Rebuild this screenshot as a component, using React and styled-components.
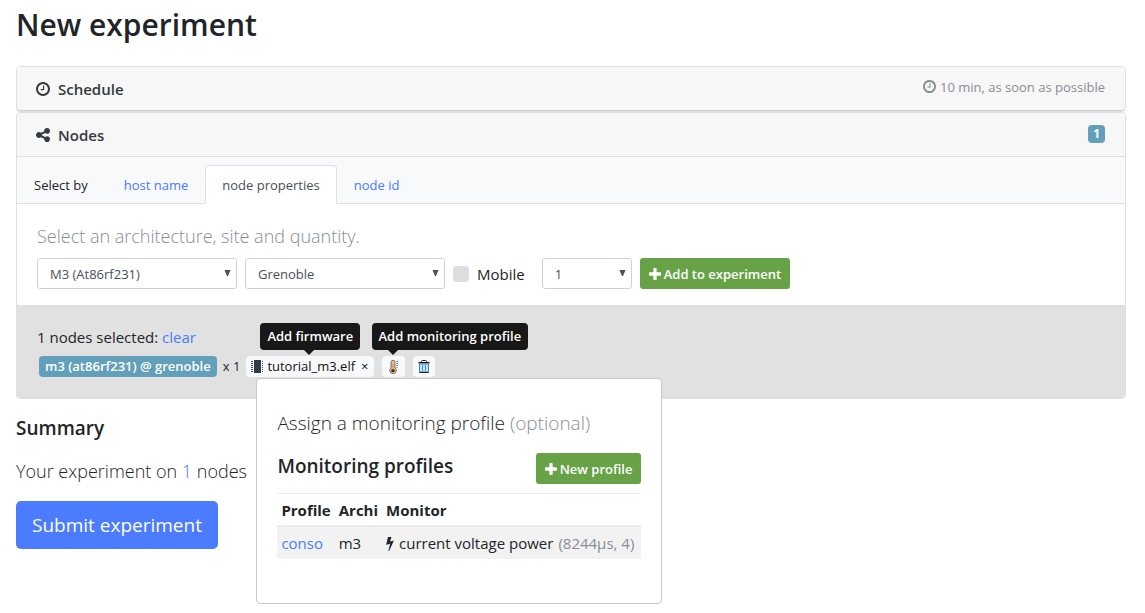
import React from "react";
import styled, { createGlobalStyle } from "styled-components";

const GlobalStyle = createGlobalStyle`
  *, *::before, *::after { box-sizing: border-box; }
  body {
    margin: 0;
    background: #fff;
    color: #212529;
    font-family: "Open Sans", "Noto Sans", sans-serif;
    font-size: 15px;
    line-height: 24px;
  }
  button, select, input { font-family: inherit; margin: 0; }
  h1, h2, h3, p { margin: 0; }
`;

const Page = styled.main`
  min-height: 100vh;
  padding: 4px 19px 8px 16px;
`;

const Title = styled.h1`
  font-size: 30px;
  font-weight: 600;
  line-height: 42px;
  margin-bottom: 20px;
`;

const Card = styled.section`
  border: 1px solid #dfdfdf;
  border-radius: 4px;
  background: #fff;
`;

const CardHeader = styled.header`
  display: flex;
  align-items: center;
  justify-content: space-between;
  height: 44px;
  padding: 0 20px 0 19px;
  background: #f7f7f7;
  border-bottom: 1px solid ${(p) => (p.$closed ? "#cfcfcf" : "#dfdfdf")};
  border-radius: ${(p) => (p.$closed ? "4px" : "4px 4px 0 0")};
`;

const CardTitle = styled.h2`
  display: flex;
  align-items: center;
  gap: 8px;
  font-size: 15px;
  font-weight: 600;
  line-height: 24px;
  color: #343a40;
`;

const HeaderNote = styled.span`
  display: flex;
  align-items: center;
  gap: 4px;
  padding-bottom: 4px;
  color: #868e96;
  font-size: 13px;
`;

const Badge = styled.span`
  padding: ${(p) => (p.$small ? "0 5px" : "0 6px")};
  border-radius: 4px;
  background: #629fba;
  color: #fff;
  font-size: ${(p) => (p.$small ? "12px" : "13px")};
  font-weight: ${(p) => (p.$small ? 700 : 600)};
  line-height: ${(p) => (p.$small ? "18px" : "21px")};
  margin-bottom: ${(p) => (p.$small ? "2px" : "0")};
  white-space: nowrap;
`;

const Tabs = styled.nav`
  display: flex;
  height: 47px;
  padding: 8px 17px 0;
  background: #f8f9fb;
  border-bottom: 1px solid #dfdfdf;
  font-size: 13px;
  line-height: 38px;
`;

const TabsLabel = styled.span`
  margin-right: 19px;
  line-height: 40px;
`;

const Tab = styled.a`
  height: 39px;
  padding: 0 16px;
  border: 1px solid ${(p) => (p.$active ? "#dfdfdf" : "transparent")};
  border-bottom-color: ${(p) => (p.$active ? "#fff" : "transparent")};
  border-radius: 4px 4px 0 0;
  background: ${(p) => (p.$active ? "#fff" : "transparent")};
  color: ${(p) => (p.$active ? "#495057" : "#4b7bff")};
  text-decoration: none;
`;

const CardBody = styled.div`
  padding: 17px 20px 16px;
`;

const Lead = styled.p`
  font-size: ${(p) => p.$size || 18}px;
  font-weight: 300;
  line-height: 30px;
  color: ${(p) => (p.$muted ? "#868e96" : "#212529")};
`;

const Form = styled.form`
  display: flex;
  flex-wrap: wrap;
  align-items: center;
  gap: 8px;
  margin-top: 7px;
`;

const SelectBox = styled.span`
  position: relative;
  width: ${(p) => p.$width}px;

  svg {
    position: absolute;
    top: 12px;
    right: 6px;
    pointer-events: none;
  }
`;

const Select = styled.select`
  display: block;
  width: 100%;
  height: 31px;
  padding: 0 12px;
  appearance: none;
  border: 1px solid #ced0da;
  border-radius: 3px;
  background: #fff;
  color: #495057;
  font-size: 13px;
`;

const CheckLabel = styled.label`
  display: flex;
  align-items: center;
  gap: 8px;
  margin-right: 9px;
`;

const Checkbox = styled.input`
  width: 16px;
  height: 16px;
  appearance: none;
  border-radius: 4px;
  background: #ddd;

  &:checked { background: #4b7bff; }
`;

const Button = styled.button`
  display: inline-flex;
  align-items: center;
  gap: 3px;
  height: 31px;
  padding: 0 9px;
  border: 0;
  border-radius: 3px;
  background: #67a346;
  color: #fff;
  font-size: 13px;
  font-weight: 600;
  white-space: nowrap;
`;

const SubmitButton = styled(Button)`
  height: 48px;
  margin-top: 15px;
  padding: 0 16px;
  border-radius: 5px;
  background: #4b7bff;
  font-size: 19px;
  font-weight: 400;
`;

const Selection = styled.div`
  padding: 20px 20px 21px;
  background: #e1e1e1;
  border-radius: 0 0 4px 4px;
`;

const Link = styled.a`
  color: #4b7bff;
  text-decoration: none;
`;

const SelectedRow = styled.div`
  display: flex;
  align-items: center;
  margin-top: 7px;
  padding-left: 2px;
  font-size: 13px;
  line-height: 21px;
`;

const Count = styled.span`
  margin: 0 6px;
`;

const Assignments = styled.div`
  position: relative;
  display: flex;
  gap: 8px;
`;

const Chip = styled.div`
  position: relative;
  display: flex;
  align-items: center;
  height: 21px;
  padding: 0 5px;
  border-radius: 4px;
  background: #f8f9fb;
  color: #111;
`;

const ChipButton = styled.button`
  display: flex;
  align-items: center;
  gap: 3px;
  padding: 0;
  border: 0;
  background: none;
  color: inherit;
  font-size: 13px;
  line-height: 21px;
  margin-left: ${(p) => (p.$close ? "6px" : "0")};
`;

const Tooltip = styled.span`
  position: absolute;
  bottom: 27px;
  left: ${(p) => p.$left}px;
  padding: 0 7px;
  border-radius: 4px;
  background: #181818;
  color: #fff;
  font-size: 13px;
  font-weight: 600;
  line-height: 27px;
  white-space: nowrap;

  &::after {
    content: "";
    position: absolute;
    top: 100%;
    left: ${(p) => p.$arrow}px;
    border: 5px solid transparent;
    border-top-color: #181818;
    border-bottom: 0;
  }
`;

const Popover = styled.div`
  position: absolute;
  top: 22px;
  left: 10px;
  width: 406px;
  padding: 29px 20px 44px;
  border: 1px solid #c9c9c9;
  border-radius: 4px;
  background: #fff;
  font-size: 15px;
`;

const Muted = styled.span`
  color: #868e96;
`;

const PopoverHead = styled.div`
  display: flex;
  align-items: center;
  justify-content: space-between;
  margin: 15px 0 9px;
`;

const SubHeading = styled.h3`
  font-size: 19px;
  font-weight: 600;
  line-height: 24px;
  padding-bottom: 5px;
`;

const Table = styled.table`
  width: 100%;
  border-collapse: collapse;
  white-space: nowrap;
  line-height: 24px;
  font-size: 15px;

  th, td { padding: 4px; text-align: left; }
  th { padding-bottom: 3px; border-top: 1px solid #e9ecef; border-bottom: 2px solid #e9ecef; }
  td { background: #f2f2f2; }
  th:last-child, td:last-child { width: 100%; }
`;

const Monitor = styled.span`
  display: flex;
  align-items: center;
  gap: 5px;
`;

const Summary = styled.section`
  margin-top: 17px;

  h2 { margin-bottom: 11px; }
`;

const FA_PATHS = {
  clock:
    "M1024 544v448q0 14-9 23t-23 9h-320q-14 0-23-9t-9-23v-64q0-14 9-23t23-9h224v-352q0-14 9-23t23-9h64q14 0 23 9t9 23zm416 352q0-148-73-273t-198-198-273-73-273 73-198 198-73 273 73 273 198 198 273 73 273-73 198-198 73-273zm224 0q0 209-103 385.5t-279.5 279.5-385.5 103-385.5-103-279.5-279.5-103-385.5 103-385.5 279.5-279.5 385.5-103 385.5 103 279.5 279.5 103 385.5z",
  share:
    "M1344 1024q133 0 226.5 93.5t93.5 226.5-93.5 226.5-226.5 93.5-226.5-93.5-93.5-226.5q0-12 2-34l-360-180q-92 86-218 86-133 0-226.5-93.5t-93.5-226.5 93.5-226.5 226.5-93.5q126 0 218 86l360-180q-2-22-2-34 0-133 93.5-226.5t226.5-93.5 226.5 93.5 93.5 226.5-93.5 226.5-226.5 93.5q-126 0-218-86l-360 180q2 22 2 34t-2 34l360 180q92-86 218-86z",
  plus:
    "M1600 736v192q0 40-28 68t-68 28h-416v416q0 40-28 68t-68 28h-192q-40 0-68-28t-28-68v-416h-416q-40 0-68-28t-28-68v-192q0-40 28-68t68-28h416v-416q0-40 28-68t68-28h192q40 0 68 28t28 68v416h416q40 0 68 28t28 68z",
  bolt:
    "M1333 566q18 20 7 44l-540 1157q-13 25-42 25-4 0-14-2-17-5-25.5-19t-4.5-30l197-808-406 101q-4 1-12 1-18 0-31-11-18-15-13-39l201-825q4-14 16-23t28-9h328q19 0 32 12.5t13 29.5q0 8-5 18l-171 463 396-98q8-2 12-2 19 0 34 15z",
};

const VIEWS = {
  clock: "128 128 1536 1536",
  share: "128 128 1536 1536",
  plus: "192 128 1408 1408",
  bolt: "448 0 896 1792",
};

function Icon({ name, width, height = width }) {
  return (
    <svg width={width} height={height} viewBox={VIEWS[name]} fill="currentColor" aria-hidden="true">
      <path d={FA_PATHS[name]} />
    </svg>
  );
}

function ChipIcon() {
  return (
    <svg width="13" height="14" viewBox="0 0 13 14" aria-hidden="true">
      <rect x="3" y="0" width="7" height="13" fill="#343a46" />
      <path d="M0 1.5h2M0 3.5h2M0 5.5h2M0 7.5h2M0 9.5h2M0 11.5h2M11 1.5h1M11 3.5h1M11 5.5h1M11 7.5h1M11 9.5h1M11 11.5h1" stroke="#444" />
    </svg>
  );
}

function ThermometerIcon() {
  return (
    <svg width="13" height="14" viewBox="0 0 13 14" aria-hidden="true">
      <path d="M4 8V2.3a2 2 0 0 1 4 0V8a3.2 3.2 0 1 1-4 0Z" fill="#f3c07a" stroke="#6b7076" />
      <circle cx="6" cy="10.6" r="1.7" fill="#222" />
      <path d="M6 4v6" stroke="#d08a3c" />
      <path d="M9.500 1.500h1.500M9.500 3.500h1.500M9.500 5.500h1.500M9.500 7.500h1" stroke="#5a6a80" />
    </svg>
  );
}

function TrashIcon() {
  return (
    <svg width="12" height="14" viewBox="0 0 12 14" aria-hidden="true">
      <path d="M3.500 2.500V1.500q0-1 1-1h3q1 0 1 1v1" fill="none" stroke="#222" />
      <path d="M0.500 2.700h11" stroke="#111" strokeWidth="1.400" />
      <path d="M1.500 4h9v8h-9Z" fill="#c6e2f7" stroke="#4a7fa8" />
      <path d="M4.500 5v6M7.500 5v6" stroke="#3f94d8" />
      <path d="M1.500 12.500h9" stroke="#222" />
    </svg>
  );
}

function SelectField({ label, width, options }) {
  return (
    <SelectBox $width={width}>
      <Select aria-label={label}>
        {options.map((option) => (
          <option key={option}>{option}</option>
        ))}
      </Select>
      <svg width="7" height="6" viewBox="0 0 7 6" aria-hidden="true">
        <path d="M0.500 0h6L4 6H3Z" fill="#495057" />
      </svg>
    </SelectBox>
  );
}

export default function App() {
  return (
    <>
      <GlobalStyle />
      <Page>
        <Title>New experiment</Title>

        <Card>
          <CardHeader $closed>
            <CardTitle>
              <Icon name="clock" width={14} />
              Schedule
            </CardTitle>
            <HeaderNote>
              <Icon name="clock" width={13} />
              10 min, as soon as possible
            </HeaderNote>
          </CardHeader>
        </Card>

        <Card>
          <CardHeader>
            <CardTitle>
              <Icon name="share" width={14} />
              Nodes
            </CardTitle>
            <Badge $small>1</Badge>
          </CardHeader>
          <Tabs>
            <TabsLabel>Select by</TabsLabel>
            <Tab href="#host">host name</Tab>
            <Tab href="#properties" $active aria-current="page">
              node properties
            </Tab>
            <Tab href="#id">node id</Tab>
          </Tabs>
          <CardBody>
            <Lead $muted>Select an architecture, site and quantity.</Lead>
            <Form onSubmit={(e) => e.preventDefault()}>
              <SelectField label="Architecture" width={200} options={["M3 (At86rf231)"]} />
              <SelectField label="Site" width={200} options={["Grenoble"]} />
              <CheckLabel>
                <Checkbox type="checkbox" />
                Mobile
              </CheckLabel>
              <SelectField label="Quantity" width={90} options={["1"]} />
              <Button type="submit">
                <Icon name="plus" width={12} />
                Add to experiment
              </Button>
            </Form>
          </CardBody>
          <Selection>
            <p>
              1 nodes selected: <Link href="#clear">clear</Link>
            </p>
            <SelectedRow>
              <Badge>m3 (at86rf231) @ grenoble</Badge>
              <Count>x 1</Count>
              <Assignments>
                <Chip>
                  <ChipButton type="button">
                    <ChipIcon />
                    tutorial_m3.elf
                  </ChipButton>
                  <ChipButton type="button" $close aria-label="Remove firmware">
                    ×
                  </ChipButton>
                  <Tooltip role="tooltip" $left={14} $arrow={44}>
                    Add firmware
                  </Tooltip>
                </Chip>
                <Chip>
                  <ChipButton type="button" aria-label="Add monitoring profile">
                    <ThermometerIcon />
                  </ChipButton>
                  <Tooltip role="tooltip" $left={-10} $arrow={16}>
                    Add monitoring profile
                  </Tooltip>
                </Chip>
                <Chip>
                  <ChipButton type="button" aria-label="Remove nodes">
                    <TrashIcon />
                  </ChipButton>
                </Chip>
                <Popover role="dialog" aria-label="Monitoring profile">
                  <Lead $size={19}>
                    Assign a monitoring profile <Muted>(optional)</Muted>
                  </Lead>
                  <PopoverHead>
                    <SubHeading>Monitoring profiles</SubHeading>
                    <Button type="button">
                      <Icon name="plus" width={12} />
                      New profile
                    </Button>
                  </PopoverHead>
                  <Table>
                    <thead>
                      <tr>
                        <th>Profile</th>
                        <th>Archi</th>
                        <th>Monitor</th>
                      </tr>
                    </thead>
                    <tbody>
                      <tr>
                        <td>
                          <Link href="#conso">conso</Link>
                        </td>
                        <td>m3</td>
                        <td>
                          <Monitor>
                            <Icon name="bolt" width={8} height={15} />
                            current voltage power <Muted>(8244µs, 4)</Muted>
                          </Monitor>
                        </td>
                      </tr>
                    </tbody>
                  </Table>
                </Popover>
              </Assignments>
            </SelectedRow>
          </Selection>
        </Card>

        <Summary>
          <SubHeading as="h2">Summary</SubHeading>
          <Lead>
            Your experiment on <Link href="#nodes">1</Link> nodes
          </Lead>
          <SubmitButton type="button">Submit experiment</SubmitButton>
        </Summary>
      </Page>
    </>
  );
}
